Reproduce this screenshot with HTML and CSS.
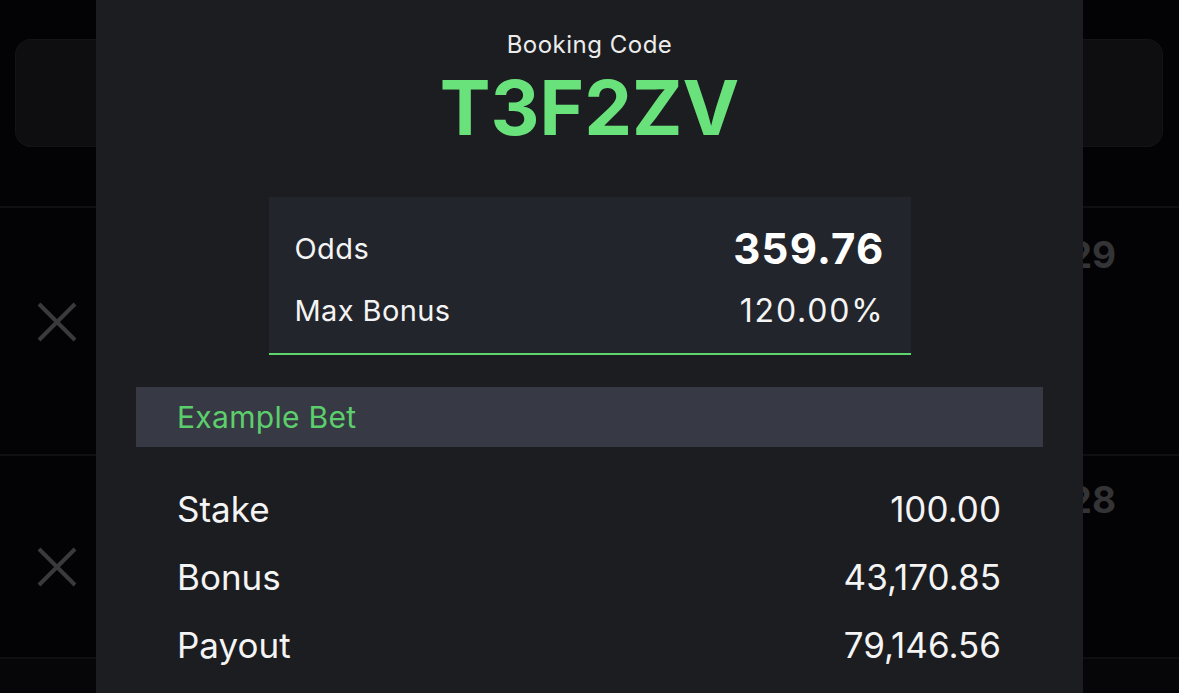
FILE: index.html
```html
<!DOCTYPE html>
<html lang="en">
<head>
    <meta charset="UTF-8">
    <meta name="viewport" content="width=device-width, initial-scale=1.0">
    <title>Booking Code</title>
    <link rel="stylesheet" href="styles.css">
</head>
<body>
    <div class="page">
        <div class="top-card"></div>
        <div class="bet-row first">
            <span class="remove">
                <svg width="40" height="40" viewBox="0 0 40 40"><path d="M2 2 L38 38 M38 2 L2 38" stroke="#3a3a3c" stroke-width="4" fill="none"/></svg>
            </span>
            <span class="bet-odds">1.29</span>
        </div>
        <div class="bet-row second">
            <span class="remove">
                <svg width="40" height="40" viewBox="0 0 40 40"><path d="M2 2 L38 38 M38 2 L2 38" stroke="#3a3a3c" stroke-width="4" fill="none"/></svg>
            </span>
            <span class="bet-odds">1.28</span>
        </div>
        <div class="page-rest"></div>
    </div>

    <!-- booking code sheet over the betslip -->
    <div class="sheet">
        <div class="sheet-title">Booking Code</div>
        <div class="sheet-code">T3F2ZV</div>

        <div class="summary">
            <div class="summary-row">
                <span>Odds</span>
                <span class="odds-value">359.76</span>
            </div>
            <div class="summary-row">
                <span>Max Bonus</span>
                <span class="bonus-value">120.00%</span>
            </div>
        </div>

        <div class="example-head">Example Bet</div>

        <div class="example-list">
            <div class="example-row">
                <span>Stake</span>
                <span>100.00</span>
            </div>
            <div class="example-row">
                <span>Bonus</span>
                <span>43,170.85</span>
            </div>
            <div class="example-row">
                <span>Payout</span>
                <span>79,146.56</span>
            </div>
        </div>
    </div>
</body>
</html>
```

FILE: styles.css
```css
body {
    margin: 0;
    padding: 0;
    background-color: #030305;
    font-family: Inter, "Noto Sans", sans-serif;
    color: #fff;
    overflow: hidden;
    height: 693px;
}

.page {
    display: flex;
    flex-direction: column;
}

.top-card {
    margin: 39px 16px 0 15px;
    height: 108px;
    border-radius: 16px;
    background-color: #0e0e10;
    box-shadow: inset 0 0 0 1px #141416;
}

.bet-row {
    border-top: 2px solid #0f0f12;
    display: flex;
    justify-content: space-between;
    align-items: flex-start;
    padding-right: 63px;
    box-sizing: border-box;
}

.bet-row.first {
    margin-top: 59px;
    height: 248px;
}

.bet-row.second {
    height: 203px;
}

.remove {
    margin-left: 37px;
    width: 40px;
    height: 40px;
    display: block;
}

.first .remove {
    margin-top: 94px;
}

.second .remove {
    margin-top: 91px;
}

.bet-odds {
    font-size: 37px;
    font-weight: 700;
    color: #343436;
    line-height: 44px;
}

.first .bet-odds {
    margin-top: 25px;
}

.second .bet-odds {
    margin-top: 22px;
}

.page-rest {
    border-top: 2px solid #0f0f12;
    height: 60px;
    background-color: #060608;
}

.sheet {
    position: absolute;
    top: 0;
    left: 96px;
    width: 987px;
    height: 693px;
    background-color: #1c1d21;
    display: flex;
    flex-direction: column;
    align-items: center;
}

.sheet-title {
    margin-top: 30px;
    font-size: 24px;
    line-height: 30px;
    color: #ececec;
    letter-spacing: 0.5px;
}

.sheet-code {
    margin-top: 7px;
    font-size: 76px;
    line-height: 80px;
    font-weight: 700;
    color: #69e27b;
}

.summary {
    margin-top: 50px;
    width: 642px;
    background-color: #23252c;
    border-bottom: 2px solid #5fd56e;
    padding: 31px 26px 23px;
    box-sizing: border-box;
    display: flex;
    flex-direction: column;
    gap: 22px;
}

.summary-row {
    display: flex;
    justify-content: space-between;
    align-items: center;
    height: 40px;
    font-size: 29px;
    letter-spacing: 0.4px;
    color: #f4f4f4;
}

.odds-value {
    font-size: 42px;
    font-weight: 700;
    letter-spacing: 1.2px;
    color: #fff;
}

.bonus-value {
    font-size: 32px;
    letter-spacing: 1.8px;
}

.example-head {
    margin-top: 32px;
    align-self: stretch;
    margin-left: 40px;
    margin-right: 40px;
    height: 60px;
    line-height: 60px;
    background-color: #373a45;
    padding-left: 41px;
    font-size: 30px;
    letter-spacing: 0.3px;
    color: #5ccf6c;
}

.example-list {
    margin-top: 28px;
    align-self: stretch;
    padding: 0 82px 0 81px;
}

.example-row {
    display: flex;
    justify-content: space-between;
    align-items: center;
    height: 68px;
    font-size: 35px;
    color: #f4f4f4;
}
```
